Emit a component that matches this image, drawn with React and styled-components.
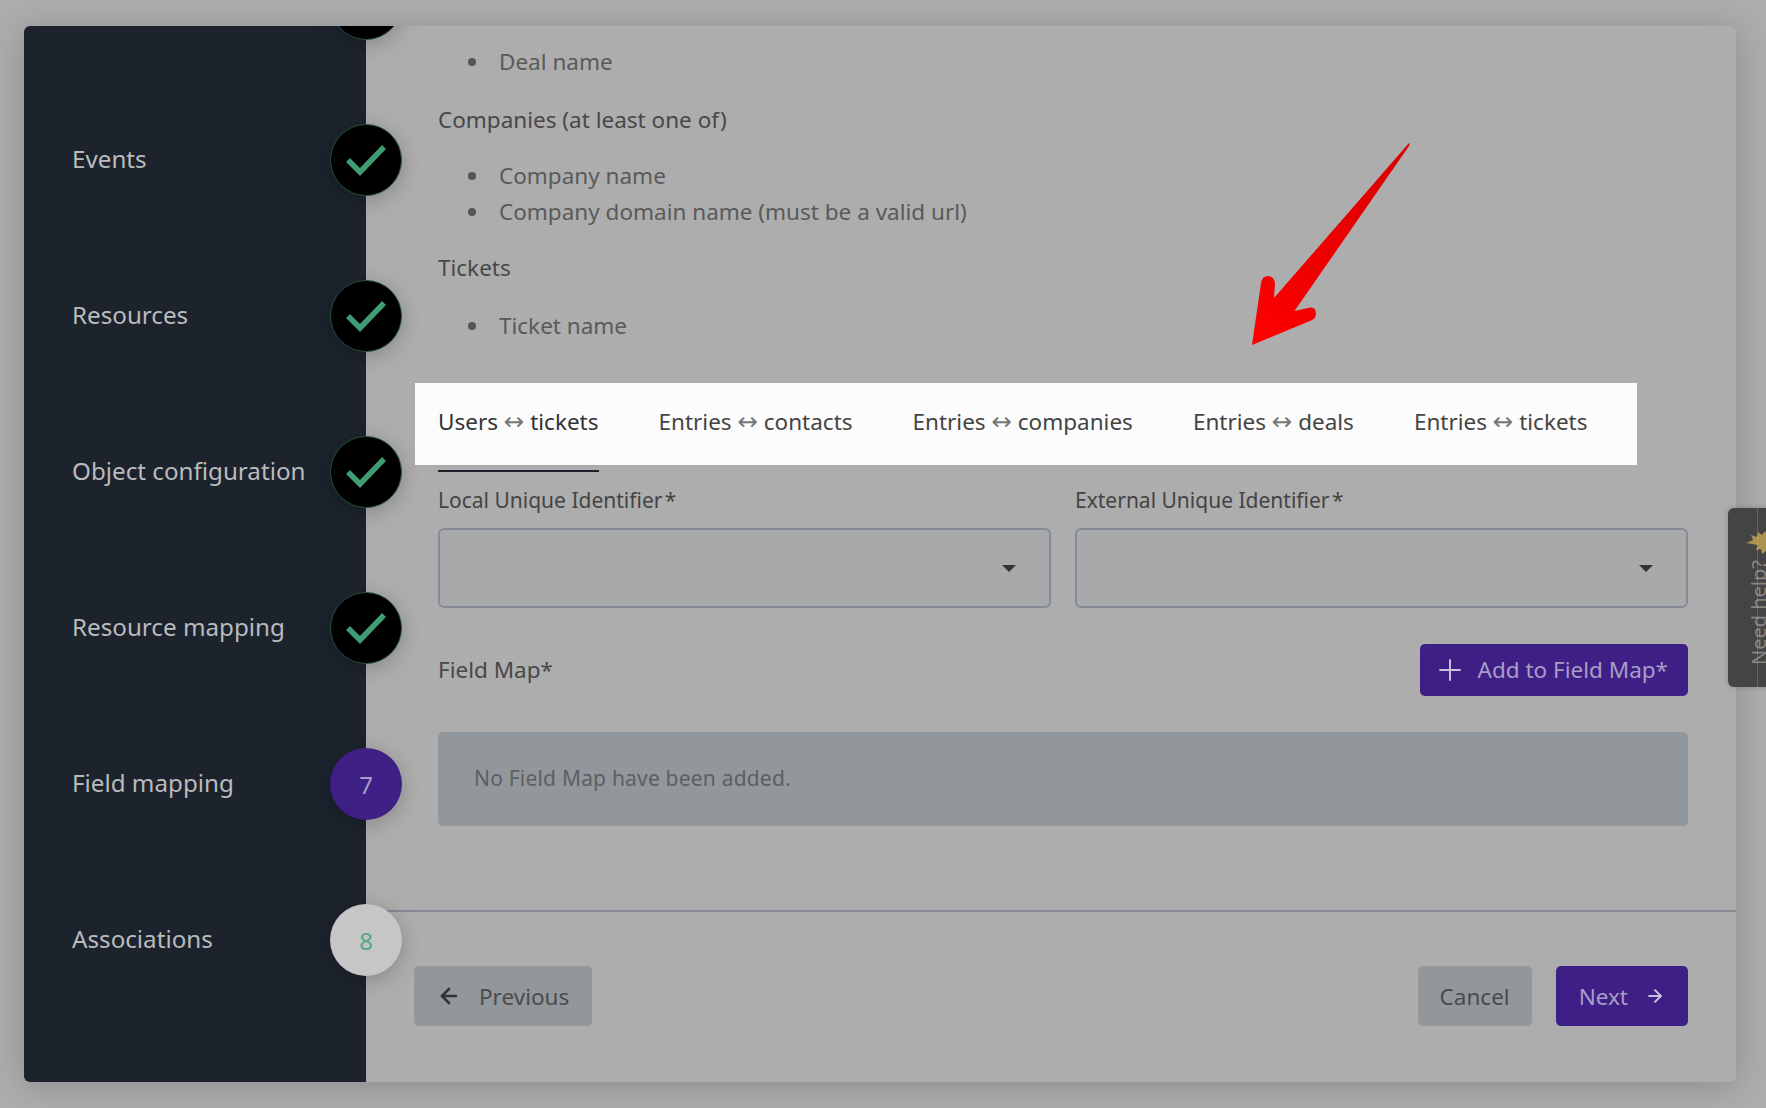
import React from "react";
import styled, { createGlobalStyle } from "styled-components";
import { ArrowLeft, ArrowRight, Plus } from "lucide-react";

const Global = createGlobalStyle`
  html, body {
    margin: 0;
    padding: 0;
    background: #adadad;
  }
  * {
    box-sizing: border-box;
  }
`;

const Page = styled.div`
  position: relative;
  width: 1766px;
  height: 1108px;
  padding: 26px 30px 26px 24px;
  overflow: hidden;
  background: #adadad;
  font-family: "Noto Sans", "Open Sans", sans-serif;
`;

const Card = styled.div`
  display: flex;
  height: 1056px;
  border-radius: 6px;
  overflow: hidden;
  background: #adadad;
  box-shadow: 0 4px 34px rgba(0, 0, 0, 0.2);
`;

const Sidebar = styled.div`
  position: relative;
  z-index: 2;
  flex: 0 0 342px;
  background: #1c232d;
`;

const Steps = styled.div`
  margin-top: -100px;
`;

const Step = styled.div`
  position: relative;
  display: flex;
  align-items: center;
  height: 156px;
  padding: 0 0 4px 48px;
  font-size: 24.2px;
  color: #b9bbbd;
`;

const Circle = styled.div`
  position: absolute;
  top: 42px;
  right: -36px;
  display: flex;
  align-items: center;
  justify-content: center;
  width: 72px;
  height: 72px;
  border-radius: 50%;
  font-size: 24px;
  box-shadow: 0 4px 20px rgba(0, 0, 0, 0.22);
  background: ${(p) => (p.$kind === "done" ? "#000" : p.$kind === "active" ? "#3e1f86" : "#c6c6c6")};
  color: ${(p) => (p.$kind === "active" ? "#a99dc6" : "#53a884")};
  border: ${(p) => (p.$kind === "done" ? "1px solid #24513f" : "none")};
`;

const Main = styled.div`
  flex: 1;
  min-width: 0;
  display: flex;
  flex-direction: column;
`;

const Body = styled.div`
  flex: 1;
  min-height: 0;
  padding: 18px 48px 0 72px;
  font-size: 22.5px;
  line-height: 36px;
  color: #484848;
`;

const Heading = styled.div`
  margin-top: ${(p) => p.$top}px;
`;

const List = styled.ul`
  margin: ${(p) => p.$top}px 0 0;
  padding: 0 0 0 61px;
  list-style: none;
  color: #5a5a5a;
`;

const ListItem = styled.li`
  position: relative;
  &::before {
    content: "";
    position: absolute;
    left: -31px;
    top: 14px;
    width: 8px;
    height: 8px;
    border-radius: 50%;
    background: #555;
  }
`;

const TabBar = styled.div`
  display: flex;
  gap: 60px;
  width: 1222px;
  height: 82px;
  margin: 39px 0 0 -23px;
  padding: 21px 0 0 23px;
  background: #fcfcfc;
`;

const Tab = styled.div`
  position: relative;
  white-space: nowrap;
  color: ${(p) => (p.$active ? "#333" : "#444")};
  &::after {
    content: "";
    display: ${(p) => (p.$active ? "block" : "none")};
    position: absolute;
    left: 0;
    right: 0;
    bottom: -7px;
    height: 2px;
    background: #1c232d;
  }
`;

const TabArrow = styled.span`
  font-family: "DejaVu Sans", sans-serif;
  font-size: 24.4px;
  line-height: 0;
  color: #777;
`;

const FieldGrid = styled.div`
  display: grid;
  grid-template-columns: 1fr 1fr;
  gap: 24px;
  margin-top: 20px;
`;

const Label = styled.div`
  height: 30px;
  line-height: 30px;
  margin-bottom: 13px;
  font-size: 21px;
  color: #444;
`;

const Star = styled.span`
  margin-left: -3px;
`;

const Select = styled.div`
  display: flex;
  align-items: center;
  justify-content: flex-end;
  height: 80px;
  padding-right: 33px;
  background: #a8a9ab;
  border: 2px solid #858b95;
  border-radius: 6px;
`;

const Caret = styled.div`
  width: 0;
  height: 0;
  margin-top: 1px;
  border-left: 7px solid transparent;
  border-right: 7px solid transparent;
  border-top: 7px solid #333;
`;

const MapRow = styled.div`
  display: flex;
  align-items: center;
  justify-content: space-between;
  margin-top: 36px;
`;

const Button = styled.div`
  display: flex;
  align-items: center;
  gap: ${(p) => p.$gap || 0}px;
  height: ${(p) => p.$height || 60}px;
  padding: 0 ${(p) => p.$pad || 22}px;
  border-radius: 5px;
  font-size: 22.5px;
  white-space: nowrap;
  background: ${(p) => (p.$primary ? "#3e1f86" : "#92979b")};
  color: ${(p) => (p.$primary ? "#a99dc6" : "#484c4f")};
`;

const PlusIcon = styled(Plus)`
  margin: 0 -7px;
`;

const Alert = styled.div`
  display: flex;
  align-items: center;
  height: 94px;
  margin-top: 36px;
  padding: 0 0 2px 36px;
  border-radius: 5px;
  background: #92979b;
  font-size: 21px;
  letter-spacing: 0.2px;
  color: #5b6063;
`;

const Footer = styled.div`
  display: flex;
  justify-content: space-between;
  height: 172px;
  padding: 54px 48px 0;
  border-top: 2px solid #858b95;
`;

const FooterRight = styled.div`
  display: flex;
  gap: 24px;
`;

const Annotation = styled.svg`
  position: absolute;
  left: 1240px;
  top: 130px;
  z-index: 3;
`;

const Feedback = styled.div`
  position: absolute;
  left: 1728px;
  top: 508px;
  z-index: 4;
  width: 60px;
  height: 179px;
  overflow: hidden;
  border-radius: 6px;
  background: #444;
  box-shadow: 0 0 6px rgba(0, 0, 0, 0.2);
  &::after {
    content: "";
    position: absolute;
    left: 29px;
    top: 0;
    bottom: 0;
    width: 1px;
    background: rgba(255, 255, 255, 0.18);
  }
`;

const FeedbackText = styled.div`
  position: absolute;
  left: 18px;
  bottom: 22px;
  writing-mode: vertical-rl;
  transform: rotate(180deg);
  font-size: 20px;
  line-height: 26px;
  white-space: nowrap;
  color: #858585;
`;

const FeedbackStar = styled.svg`
  position: absolute;
  left: 18px;
  top: 23px;
`;

const steps = [
  { label: "", state: "done" },
  { label: "Events", state: "done" },
  { label: "Resources", state: "done" },
  { label: "Object configuration", state: "done" },
  { label: "Resource mapping", state: "done" },
  { label: "Field mapping", state: "active", num: 7 },
  { label: "Associations", state: "todo", num: 8 },
];

const tabs = [
  ["Users", "tickets"],
  ["Entries", "contacts"],
  ["Entries", "companies"],
  ["Entries", "deals"],
  ["Entries", "tickets"],
];

const Check = () => (
  <svg width="44" height="34" viewBox="0 0 44 34" fill="none">
    <path d="M4 17 L16 29 L40 4" stroke="#3f9c73" strokeWidth="5.5" />
  </svg>
);

const App = () => {
  return (
    <Page>
      <Global />
      <Card>
        <Sidebar>
          <Steps>
            {steps.map((s, i) => (
              <Step key={i}>
                {s.label}
                <Circle $kind={s.state}>{s.state === "done" ? <Check /> : s.num}</Circle>
              </Step>
            ))}
          </Steps>
        </Sidebar>
        <Main>
          <Body>
            <List $top={0}>
              <ListItem>Deal name</ListItem>
            </List>
            <Heading $top={22}>Companies (at least one of)</Heading>
            <List $top={20}>
              <ListItem>Company name</ListItem>
              <ListItem>Company domain name (must be a valid url)</ListItem>
            </List>
            <Heading $top={20}>Tickets</Heading>
            <List $top={22}>
              <ListItem>Ticket name</ListItem>
            </List>
            <TabBar>
              {tabs.map(([from, to], i) => (
                <Tab key={from + to} $active={i === 0}>
                  {from} <TabArrow>↔</TabArrow> {to}
                </Tab>
              ))}
            </TabBar>
            <FieldGrid>
              <div>
                <Label>
                  Local Unique Identifier<Star> *</Star>
                </Label>
                <Select>
                  <Caret />
                </Select>
              </div>
              <div>
                <Label>
                  External Unique Identifier<Star> *</Star>
                </Label>
                <Select>
                  <Caret />
                </Select>
              </div>
            </FieldGrid>
            <MapRow>
              <div>Field Map*</div>
              <Button $primary $height={52} $gap={18} $pad={20}>
                <PlusIcon size={34} strokeWidth={1.4} color="#c9c1de" />
                Add to Field Map*
              </Button>
            </MapRow>
            <Alert>No Field Map have been added.</Alert>
          </Body>
          <Footer>
            <Button $gap={18} $pad={23}>
              <ArrowLeft size={24} strokeWidth={2.6} color="#333" />
              Previous
            </Button>
            <FooterRight>
              <Button>Cancel</Button>
              <Button $primary $gap={17} $pad={23}>
                Next
                <ArrowRight size={20} strokeWidth={2.4} color="#c9c1de" />
              </Button>
            </FooterRight>
          </Footer>
        </Main>
      </Card>

      <Annotation width="180" height="220" viewBox="0 0 180 220">
        <defs>
          <linearGradient id="redArrow" x1="0" y1="1" x2="1" y2="0">
            <stop offset="0" stopColor="#ff0000" />
            <stop offset="1" stopColor="#d90000" />
          </linearGradient>
        </defs>
        <path
          d="M169 13 Q170 14 169 16 L54.5 181 L68 178 Q76 176 76 184 Q76 189 70 191 L12 215 L21 153 Q22 146 28 146 Q35 147 35 154 L34 168 Z"
          fill="url(#redArrow)"
        />
      </Annotation>

      <Feedback>
        <FeedbackStar width="30" height="24" viewBox="0 0 30 24">
          <path
            d="M19 0 L21 4 L25 1 L26 6 L30 5 L30 20 L25 19 L24 24 L20 20 L16 23 L15 18 L10 19 L12 14 L0 12 L7 9 L5 4 L11 6 L12 1 L16 4 Z"
            fill="#ab9350"
          />
        </FeedbackStar>
        <FeedbackText>Need help?</FeedbackText>
      </Feedback>
    </Page>
  );
};

export default App;
